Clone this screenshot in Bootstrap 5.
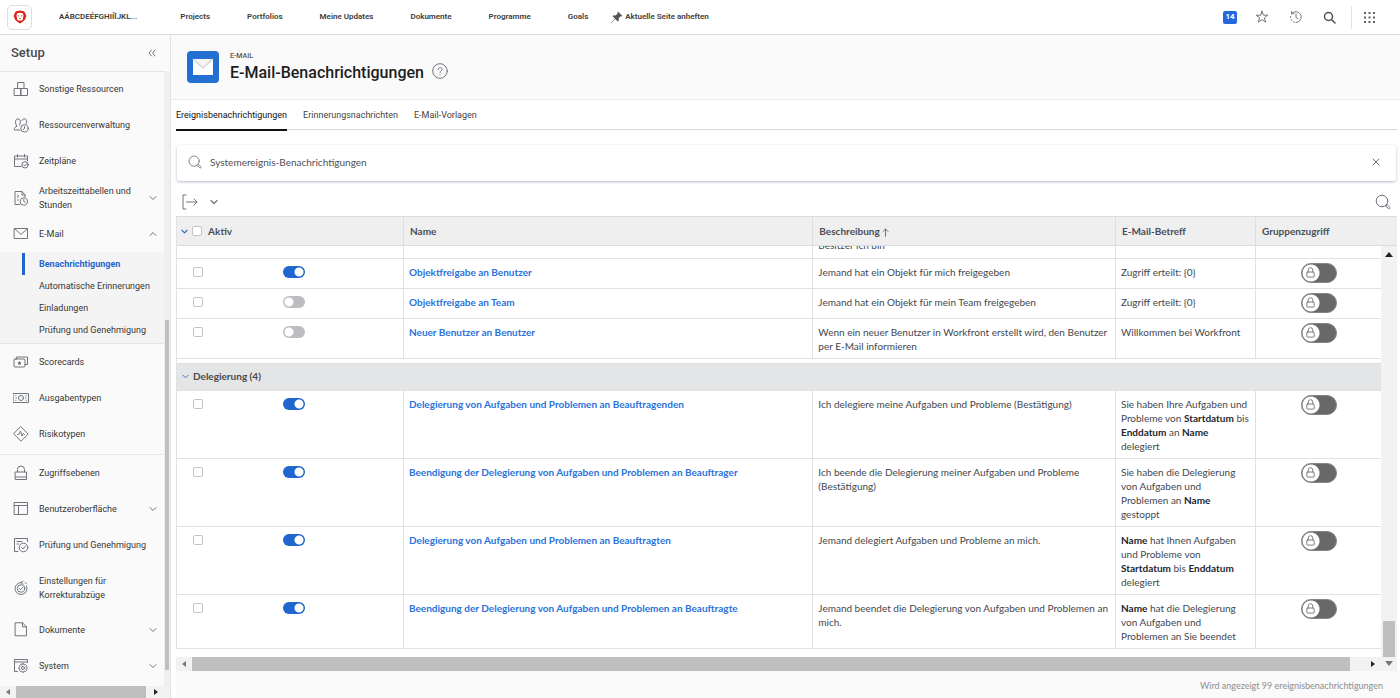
<!DOCTYPE html>
<html lang="de">
<head>
<meta charset="utf-8">
<meta name="viewport" content="width=device-width, initial-scale=1">
<title>E-Mail-Benachrichtigungen</title>
<link href="https://cdn.jsdelivr.net/npm/bootstrap@5.3.0/dist/css/bootstrap.min.css" rel="stylesheet">
<style>
:root{--ink:#3a3a3a;--line:#e1e1e1;--soft:#fafafa;--blue:#1f66cf;--stroke:#70757d}
body{font:10px/14px Lato,"Open Sans",sans-serif;color:#43474f;background:#fff}
a{text-decoration:none;color:inherit}
button{font:inherit;color:inherit}
.ui{font-family:Roboto,"Noto Sans",sans-serif}
.ico{fill:none;stroke:var(--stroke);stroke-width:1;stroke-linecap:round;stroke-linejoin:round;flex:none}
.plain{border:0;background:none;padding:0;display:flex;align-items:center}
.topbar{height:35px;border-bottom:1px solid #dcdcdc;padding-left:7px;padding-right:25px;font-size:8px;font-weight:600;line-height:12px;color:#3c3c3c}
.logo-box{width:25px;height:25px;border:1px solid #dedede;border-radius:5px}
.topnav{gap:37px;margin-left:27px}
.topnav a:first-child{margin-right:6px}
.pin{margin-left:22px;gap:2px}
.count{background:#2468dd;color:#fff;width:14px;height:13px;border-radius:2px;font-size:8px;line-height:12px;font-weight:700;margin-right:18px}
.tools .sep{width:1px;height:23px;background:#e2e2e2;margin-left:15px;margin-right:12px}
.side{width:171px;background:var(--soft);border-right:1px solid #e3e3e3;font-size:9px;color:#363636}
.side-head{height:37px;padding:0 14px 0 11px;border-bottom:1px solid #e4e4e4}
.side-head h2{font-size:13px;line-height:18px;font-weight:500;color:#4a4a4a;margin:0}
.side-body{overflow:hidden;margin-top:-1px}
.menu{list-style:none;margin:0;padding:0;width:164px}
.menu-group{border-bottom:1px solid #e6e6e6}
.menu-group.spaced{padding-bottom:2px}
.menu-group:last-child{border-bottom:0}
.entry{min-height:36px;padding:0 7px 0 13px;gap:10px;color:inherit}
.entry.two-line{min-height:37px}
.entry.tall{min-height:49px}
.entry span{flex:1;white-space:nowrap}
.submenu{list-style:none;margin:0;padding:1px 0 2px;background:#f4f4f4}
.submenu a{display:block;line-height:22px;padding-left:14px;margin-left:22px;border-left:3px solid transparent;white-space:nowrap}
.submenu a.active{border-color:var(--blue);color:var(--blue);font-weight:700}
.track-v{width:6px;background:#efefef;padding-top:249px;padding-right:1px;padding-left:1px}
.thumb{background:#bfbfbf}
.track-v .thumb{height:350px}
.track-h{height:12px;background:#f2f2f2}
.track-h .arrow{width:16px;display:flex;justify-content:center}
.track-h.wide{height:14px}
.track-h.wide .end{width:31px;padding-left:14px}
.page-head{height:65px;background:var(--soft);border-bottom:1px solid #ececec;padding:0 16px}
.page-icon{width:32px;height:32px;border-radius:4px;background:#2470d2}
.page-title{padding-left:3px}
.crumb{font-size:7px;line-height:9px;font-weight:500;color:#555}
.page-head h1{font-size:16px;line-height:20px;font-weight:500;color:#1d1d1d;margin:2px 0 0}
.content{padding:0 3px 0 5px}
.tabs{height:30px;border-bottom:1px solid #d9d9d9;font-size:9px;gap:16px}
.tabs a{padding-top:8px;height:31px;border-bottom:2px solid transparent;color:#444}
.tabs a.active{border-color:#111;color:#111}
.find{height:36px;margin:15px 1px 0;border-radius:3px;background:#fff;box-shadow:0 1px 3px rgba(60,80,110,.38);padding:0 16px 2px 11px;gap:8px}
.find input{border:0;outline:0;background:none;font:inherit;color:#4d5158;padding:0;flex:1;min-width:0}
.bar{height:35px;padding:6px 6px 0;color:#666}
.grid-wrap{flex:1;min-width:0;padding-bottom:8px}
.grid{width:100%;table-layout:fixed;border-collapse:separate;border-spacing:0;border-left:1px solid var(--line)}
.grid th{height:30px;background:#efefef;border-top:1px solid #dcdcdc;border-bottom:1px solid #dcdcdc;border-right:1px solid #dedede;padding:0 5px 0 6px;font-weight:700;color:#4a4e57;vertical-align:middle}
.grid th:first-child{padding-left:4px}
.grid th:last-child{border-right:0}
.grid td{vertical-align:top;padding:6px 5px 5px;border-bottom:1px solid var(--line);border-right:1px solid var(--line)}
.grid td:last-child{border-right:0}
.grid td.flat{padding-top:4px;padding-bottom:5px}
.grid b{font-weight:700;color:#22262e}
.grid td a{color:#2a72dc;font-weight:700}
.grid tr.rest td{padding-top:0;padding-bottom:0}
.cut{height:12px;overflow:hidden}
.cut p{margin:-8px 0 0}
.grid tr.gap td{height:4px;padding:0;border-right:0;border-bottom:0}
.grid tr.band td{height:28px;padding:0 5px 2px;background:#e4e5e7;vertical-align:middle;color:#4a4a4a;font-weight:700;border-right:0;border-top:1px solid #dedede}
.head-cell{gap:4px}
.tick{appearance:none;width:10px;height:10px;border:1px solid #c2c4c8;border-radius:2px;background:#fff;margin:0;display:block;flex:none}
.active-cell{padding-left:11px;height:14px}
.switch-on{appearance:none;width:22px;height:12px;border-radius:6px;background:#bcbdc1 radial-gradient(circle at 6px 6px,#fff 4px,transparent 5px)}
.switch-on:checked{background:var(--blue) radial-gradient(circle at 16px 6px,#fff 4px,transparent 5px)}
.active-cell .switch-on{margin:0 0 1px 80px}
.locked{position:relative;width:36px;height:20px;display:block;margin:0 auto}
.locked input{appearance:none;width:36px;height:20px;border-radius:10px;background:#686868 radial-gradient(circle at 9px 9px,#fff 8px,transparent 9px);border:1px solid #858585;margin:0;display:block}
.locked svg{position:absolute;left:4px;top:4px}
.scroll-col{width:16px}
.scroll-col .cap{height:30px;background:#efefef;border-top:1px solid #dcdcdc;border-bottom:1px solid #dcdcdc}
.scroll-col .rail{background:#f2f2f2;flex:1;padding:6px 2px 0}
.scroll-col .thumb{height:36px}
.foot{background:var(--soft);color:#8e8e8e;font-size:9px;line-height:25px;padding:2px 17px 0;margin-left:5px}
</style>
<script src="https://cdn.jsdelivr.net/npm/bootstrap@5.3.0/dist/js/bootstrap.bundle.min.js"></script>
</head>
<body class="d-flex flex-column min-vh-100">
<svg width="0" height="0" class="position-absolute" aria-hidden="true">
  <symbol id="chev" viewBox="0 0 8 8"><path d="M1 2.5 4 5.500 7 2.500"/></symbol>
  <symbol id="chev-up" viewBox="0 0 8 8"><path d="M1 5.500 4 2.500 7 5.500"/></symbol>
  <symbol id="lens" viewBox="0 0 16 16"><circle cx="7" cy="7" r="5.800"/><path d="m11 12 1.200-1.200 2.600 2.600c.8.8-.4 2-1.200 1.200z"/></symbol>
  <symbol id="lock" viewBox="0 0 12 12"><rect x="2" y="5.500" width="8" height="5.500" rx=".6"/><path d="M3.500 5.500V3.300a2.500 2.500 0 0 1 5 0v2.200"/></symbol>
  <symbol id="left" viewBox="0 0 6 8"><path d="M5 1v6L1 4z" fill="#777" stroke="none"/></symbol>
  <symbol id="right" viewBox="0 0 6 8"><path d="M1 1v6l4-3z" fill="#222" stroke="none"/></symbol>
</svg>

<header class="topbar ui d-flex align-items-center flex-shrink-0">
  <a href="#" class="logo-box d-flex align-items-center justify-content-center" aria-label="Startseite">
    <svg width="14" height="14" viewBox="0 0 14 14"><path fill="#dc2418" d="M3.200 1.200 7 .5l3.800.7 1.500 1.800 1 3-1.300 3.500L9.500 12 7 13.500 4.500 12 2 9.500.7 6l1-3z"/><path fill="#fff" d="M4.200 3.200 7 2.800l2.800.4.700 2.300-.8 4L8.300 11H5.700L4.300 9.500l-.8-4z"/><path fill="#dc2418" d="m4.200 5 2.100.8-.5 1zM9.800 5l-2.100.8.5 1zM6 8h2l-1 1.200zM5.500 10h3v.6h-3z"/></svg>
  </a>
  <nav class="topnav d-flex">
    <a href="#">AÁBCDEÉFGHIÍĬJKL...</a><a href="#">Projects</a><a href="#">Portfolios</a><a href="#">Meine Updates</a><a href="#">Dokumente</a><a href="#">Programme</a><a href="#">Goals</a>
  </nav>
  <button class="plain pin" type="button"><svg width="13" height="13" viewBox="0 0 13 13" fill="#555"><path d="M8 .6 12.400 5l-1 .5-.8-.2-2 2.100.2 2-1 1L5.300 8 1 12.300.500 12.500l.2-.6L5 7.700 2.600 5.300l1-1 2 .2 2.100-2-.2-.9z"/></svg>Aktuelle Seite anheften</button>
  <div class="tools d-flex align-items-center ms-auto">
    <button class="plain count justify-content-center" type="button">14</button>
    <button class="plain" type="button" aria-label="Favoriten"><svg class="ico" width="14" height="14" viewBox="0 0 14 14"><path d="m7 1.200 1.500 4h4.300L9.400 7.800l1.300 4.400L7 9.600l-3.700 2.600 1.300-4.400L1.200 5.200h4.300z"/></svg></button>
    <button class="plain ms-3 ps-1" type="button" aria-label="Verlauf"><svg class="ico" width="14" height="14" viewBox="0 0 14 14"><path d="M2.600 3.700A5.400 5.400 0 1 1 7 12.500M2.600 3.700V1.500M2.600 3.700h2.200M7 4v3.500l2 1.200"/><path d="M1.600 6.500a5.400 5.400 0 0 0 4 5.700" stroke-dasharray="1 2"/></svg></button>
    <button class="plain ms-3 ps-1" type="button" aria-label="Suche"><svg class="ico" width="13" height="13" viewBox="0 0 13 13" style="stroke:#505050;stroke-width:1.5"><circle cx="5.500" cy="5.500" r="4"/><path d="M8.500 8.500 12 12"/></svg></button>
    <span class="sep"></span>
    <button class="plain" type="button" aria-label="Apps"><svg width="11" height="11" viewBox="0 0 11 11" fill="#606060"><path d="M0 0h2v2H0zM4.500 0h2v2h-2zM9 0h2v2H9zM0 4.500h2v2H0zM4.500 4.500h2v2h-2zM9 4.500h2v2H9zM0 9h2v2H0zM4.500 9h2v2h-2zM9 9h2v2H9z"/></svg></button>
  </div>
</header>

<div class="d-flex flex-grow-1">
<aside class="side ui d-flex flex-column flex-shrink-0">
  <div class="side-head d-flex align-items-center justify-content-between"><h2>Setup</h2>
    <button class="plain" type="button" aria-label="Einklappen"><svg class="ico" width="8" height="8" viewBox="0 0 8 8"><path d="M3.500 1 1 4l2.500 3M7 1 4.500 4 7 7"/></svg></button></div>
  <div class="side-body d-flex flex-grow-1">
  <nav>
    <ul class="menu">
      <li class="menu-group"><ul class="list-unstyled m-0">
        <li><a class="entry d-flex align-items-center" href="#"><svg class="ico" width="16" height="16" viewBox="0 0 16 16"><path d="M5 1.500h6v6H5zM1.500 7.500H8v7H1.500zM8 7.500h6.500v7H8z"/></svg><span>Sonstige Ressourcen</span></a></li>
        <li><a class="entry d-flex align-items-center" href="#"><svg class="ico" width="16" height="16" viewBox="0 0 16 16"><path d="M7 13H1.200c0-2.500 1-3 2.800-3.700C2.500 7.500 2 4.500 3 3c1-1.600 3-1.600 4 0 .6 1.200.5 3.500-.5 5.200M9 3.500c.5-2 3.500-2.300 4.300-.5.4 1 .4 2.200 0 3.500"/><circle cx="11.500" cy="11.300" r="3.700"/><path d="M11.500 9.500v2l-1.200 1"/></svg><span>Ressourcenverwaltung</span></a></li>
        <li><a class="entry d-flex align-items-center" href="#"><svg class="ico" width="16" height="16" viewBox="0 0 16 16"><path d="M8 13.500H1.500V3h13v5M1.500 6h13M4.500 1.500V4M11.500 1.500V4"/><circle cx="12" cy="11.800" r="3.200"/><path d="m10.500 11.800 1.200 1.200 2-2.300"/></svg><span>Zeitpläne</span></a></li>
        <li><a class="entry two-line d-flex align-items-center" href="#"><svg class="ico" width="16" height="16" viewBox="0 0 16 16"><path d="M6.500 14.500H2v-13h7L12 5v2M9 1.500V5h3M5 5v2.500M4.500 10h1"/><circle cx="10.800" cy="11.500" r="3.700"/><path d="M10.800 9.500v2l1.500 1"/></svg><span>Arbeitszeittabellen und<br>Stunden</span><svg class="ico" width="8" height="8"><use href="#chev"/></svg></a></li>
        <li><a class="entry d-flex align-items-center" href="#"><svg class="ico" width="16" height="16" viewBox="0 0 16 16"><path d="M1.500 2.500h13v10h-13zM1.500 2.500l6.500 6 6.500-6"/></svg><span>E-Mail</span><svg class="ico" width="8" height="8"><use href="#chev-up"/></svg></a>
          <ul class="submenu">
            <li><a href="#" class="active">Benachrichtigungen</a></li><li><a href="#">Automatische Erinnerungen</a></li><li><a href="#">Einladungen</a></li><li><a href="#">Prüfung und Genehmigung</a></li>
          </ul></li>
      </ul></li>
      <li class="menu-group spaced"><ul class="list-unstyled m-0">
        <li><a class="entry d-flex align-items-center" href="#"><svg class="ico" width="16" height="16" viewBox="0 0 16 16"><rect x="1" y="5" width="11" height="8" rx="1"/><path d="M3.500 5V3h11v7.500H12"/><path d="m6.500 7 .6 1.400 1.500.1-1.200 1 .4 1.500-1.300-.8-1.300.8.4-1.500-1.200-1 1.500-.1z" fill="#555" stroke="none"/></svg><span>Scorecards</span></a></li>
        <li><a class="entry d-flex align-items-center" href="#"><svg class="ico" width="16" height="16" viewBox="0 0 16 16"><path d="M.5 3.500h15v9H.5z"/><circle cx="8" cy="8" r="2.500"/><path d="M2.700 5.700h.3M2.700 10.300h.3M13 5.700h.3M13 10.300h.3M3 8h.5M12.500 8h.5"/></svg><span>Ausgabentypen</span></a></li>
        <li><a class="entry d-flex align-items-center" href="#"><svg class="ico" width="16" height="16" viewBox="0 0 16 16"><path d="m8 .8 7.200 7.200L8 15.200.8 8zM4.500 8.500h1.200L7.500 5l1.500 5 1.200-2.500 1.300 1"/></svg><span>Risikotypen</span></a></li>
      </ul></li>
      <li class="menu-group"><ul class="list-unstyled m-0">
        <li><a class="entry d-flex align-items-center" href="#"><svg class="ico" width="16" height="16" viewBox="0 0 16 16"><path d="M2.500 7h11v7.500h-11zM4.500 7V4.500a3.500 3.500 0 0 1 7 0V7M2.500 12h11"/></svg><span>Zugriffsebenen</span></a></li>
        <li><a class="entry d-flex align-items-center" href="#"><svg class="ico" width="16" height="16" viewBox="0 0 16 16"><path d="M1.500 1.500h13v12h-13zM1.500 4.500h13M5.500 4.500v9"/></svg><span>Benutzeroberfläche</span><svg class="ico" width="8" height="8"><use href="#chev"/></svg></a></li>
        <li><a class="entry d-flex align-items-center" href="#"><svg class="ico" width="16" height="16" viewBox="0 0 16 16"><path d="M5 14.500H1.500v-13h13v3M4 4.500h5M4 7h1.500"/><circle cx="10.500" cy="10.500" r="4.300"/><path d="m8.500 10.500 1.500 1.500 2.500-3"/></svg><span>Prüfung und Genehmigung</span></a></li>
        <li><a class="entry tall d-flex align-items-center" href="#"><svg class="ico" width="16" height="16" viewBox="0 0 16 16"><path d="M8 2.500A6 6 0 1 0 13.500 6M8 2.500l2-1.300M8 2.500l2 1.500M12 2.500l1.500 1.500"/><circle cx="8" cy="8.500" r="3.700"/><path d="m6.300 8.500 1.300 1.300 2.200-2.400"/></svg><span>Einstellungen für<br>Korrekturabzüge</span></a></li>
        <li><a class="entry d-flex align-items-center" href="#"><svg class="ico" width="16" height="16" viewBox="0 0 16 16"><path d="M2.500.8h7l4 4v9h-11zM9.500.8v4h4"/></svg><span>Dokumente</span><svg class="ico" width="8" height="8"><use href="#chev"/></svg></a></li>
        <li><a class="entry d-flex align-items-center" href="#"><svg class="ico" width="16" height="16" viewBox="0 0 16 16"><path d="M4.500 13.500h-3v-12h13v3M1.500 4h13"/><circle cx="10" cy="10" r="1.500"/><path d="m9.300 5.700 1.400 0 .4 1.300 1.300-.5 1 1-.5 1.200 1.300.6v1.400l-1.300.5.5 1.300-1 1-1.300-.5-.4 1.300H9.300l-.5-1.300-1.300.5-1-1 .6-1.300-1.300-.5V9.300l1.300-.6-.6-1.200 1-1 1.300.5z"/></svg><span>System</span><svg class="ico" width="8" height="8"><use href="#chev"/></svg></a></li>
      </ul></li>
    </ul>
  </nav>
  <div class="track-v"><div class="thumb"></div></div>
  </div>
  <div class="track-h d-flex align-items-center"><span class="arrow"><svg width="6" height="8"><use href="#left"/></svg></span><span class="thumb flex-grow-1 h-100"></span><span class="arrow me-2 ps-1"><svg width="6" height="8"><use href="#right"/></svg></span></div>
</aside>

<main class="flex-grow-1 d-flex flex-column">
  <div class="page-head ui d-flex align-items-center gap-2">
    <span class="page-icon d-flex align-items-center justify-content-center"><svg width="22" height="18" viewBox="0 0 22 18"><path fill="#fff" d="M1 1h20v16H1z"/><path d="m1 1 10 9L21 1" fill="#f4f4f4" stroke="#cfd3d8" stroke-width="1.200"/></svg></span>
    <div class="page-title"><div class="crumb">E-MAIL</div><h1>E-Mail-Benachrichtigungen</h1></div>
    <button class="plain mt-2" type="button" aria-label="Hilfe"><svg class="ico" width="16" height="16" viewBox="0 0 16 16"><circle cx="8" cy="8" r="7.300"/><path d="M6 6.500c0-2.600 4-2.600 4-.2 0 1.500-2 1.500-2 3.200M8 11.500v.2"/></svg></button>
  </div>
  <div class="content">
    <nav class="tabs ui d-flex"><a href="#" class="active">Ereignisbenachrichtigungen</a><a href="#">Erinnerungsnachrichten</a><a href="#">E-Mail-Vorlagen</a></nav>
    <div class="find d-flex align-items-center">
      <svg class="ico" width="14" height="14"><use href="#lens"/></svg>
      <input type="text" aria-label="Suchen" value="Systemereignis-Benachrichtigungen">
      <button class="plain" type="button" aria-label="Leeren"><svg class="ico" width="8" height="8" viewBox="0 0 8 8"><path d="m1 1 6 6M7 1 1 7"/></svg></button>
    </div>
    <div class="bar d-flex align-items-center justify-content-between">
      <button class="plain gap-2" type="button" aria-label="Exportieren"><svg class="ico" width="16" height="16" viewBox="0 0 16 16"><path d="M4 1H1v14h3M4.500 8H15M12 5l3 3-3 3"/></svg><svg class="ico ms-1" width="8" height="8" style="stroke-width:1.200"><use href="#chev"/></svg></button>
      <button class="plain" type="button" aria-label="Suchen"><svg class="ico" width="16" height="16"><use href="#lens"/></svg></button>
    </div>
    <div class="d-flex">
      <div class="grid-wrap">
      <table class="grid">
        <colgroup><col style="width:227px"><col style="width:34%"><col><col style="width:140px"><col style="width:125px"></colgroup>
        <thead><tr>
          <th scope="col"><div class="head-cell d-flex align-items-center"><svg class="ico" width="7" height="7" style="stroke:#2667b8;stroke-width:1.300"><use href="#chev"/></svg><input class="tick" type="checkbox" id="all"><label for="all">&nbsp;Aktiv</label></div></th>
          <th scope="col">Name</th><th scope="col">Beschreibung <svg class="ico" width="7" height="9" viewBox="0 0 7 9"><path d="M3.500 8.500V1M1 3.500 3.500 1 6 3.500"/></svg></th><th scope="col">E-Mail-Betreff</th><th scope="col">Gruppenzugriff</th>
        </tr></thead>
        <tbody id="rows"></tbody>
      </table>
      </div>
      <div class="scroll-col d-flex flex-column">
        <div class="cap"></div>
        <div class="rail d-flex flex-column"><svg class="mx-auto" width="8" height="6" viewBox="0 0 8 6"><path d="M0 5h8L4 0z" fill="#222"/></svg><div class="thumb mt-auto"></div></div>
      </div>
    </div>
    <div class="track-h wide d-flex align-items-center"><span class="arrow"><svg width="6" height="8"><use href="#left"/></svg></span><span class="thumb flex-grow-1 h-100"></span><span class="arrow end"><svg width="6" height="8"><use href="#right"/></svg></span><span class="arrow"><svg width="8" height="6" viewBox="0 0 8 6"><path d="M0 0h8L4 5z" fill="#777"/></svg></span></div>
  </div>
  <footer class="foot text-end flex-grow-1">Wird angezeigt 99 ereignisbenachrichtigungen</footer>
</main>
</div>
<script>
const rows = [
  {on:true,  name:"Objektfreigabe an Benutzer", text:"Jemand hat ein Objekt für mich freigegeben", subject:"Zugriff erteilt: {0}"},
  {on:false, name:"Objektfreigabe an Team", text:"Jemand hat ein Objekt für mein Team freigegeben", subject:"Zugriff erteilt: {0}"},
  {on:false, name:"Neuer Benutzer an Benutzer", text:"Wenn ein neuer Benutzer in Workfront erstellt wird, den Benutzer per E-Mail informieren", subject:"Willkommen bei Workfront"},
  {band:"Delegierung (4)"},
  {on:true, name:"Delegierung von Aufgaben und Problemen an Beauftragenden", text:"Ich delegiere meine Aufgaben und Probleme (Bestätigung)", subject:"Sie haben Ihre Aufgaben und Probleme von <b>Startdatum</b> bis <b>Enddatum</b> an <b>Name</b><br>delegiert"},
  {on:true, name:"Beendigung der Delegierung von Aufgaben und Problemen an Beauftrager", text:"Ich beende die Delegierung meiner Aufgaben und Probleme (Bestätigung)", subject:"Sie haben die Delegierung von Aufgaben und Problemen an <b>Name</b> gestoppt"},
  {on:true, name:"Delegierung von Aufgaben und Problemen an Beauftragten", text:"Jemand delegiert Aufgaben und Probleme an mich.", subject:"<b>Name</b> hat Ihnen Aufgaben und Probleme von <b>Startdatum</b> bis <b>Enddatum</b> delegiert"},
  {on:true, name:"Beendigung der Delegierung von Aufgaben und Problemen an Beauftragte", text:"Jemand beendet die Delegierung von Aufgaben und Problemen an mich.", subject:"<b>Name</b> hat die Delegierung von Aufgaben und Problemen an Sie beendet"}
];
document.getElementById("rows").innerHTML =
  '<tr class="rest"><td></td><td></td><td><div class="cut"><p>Besitzer ich bin</p></div></td><td></td><td></td></tr>' +
  rows.map(r => r.band
    ? `<tr class="gap"><td colspan="5"></td></tr><tr class="band"><td colspan="5"><div class="d-flex align-items-center gap-1"><svg class="ico" width="7" height="7" style="stroke:#2667b8"><use href="#chev"/></svg>${r.band}</div></td></tr>`
    : `<tr><td><div class="active-cell d-flex align-items-center"><input class="tick" type="checkbox" aria-label="${r.name} auswählen"><input class="switch-on" type="checkbox" role="switch" aria-label="${r.name} aktiv" ${r.on ? "checked" : ""}></div></td><td><a href="#">${r.name}</a></td><td>${r.text}</td><td>${r.subject}</td><td class="flat"><label class="locked"><input type="checkbox" role="switch" disabled aria-label="Gruppenzugriff"><svg class="ico" width="11" height="11"><use href="#lock"/></svg></label></td></tr>`).join("");
</script>
</body>
</html>
